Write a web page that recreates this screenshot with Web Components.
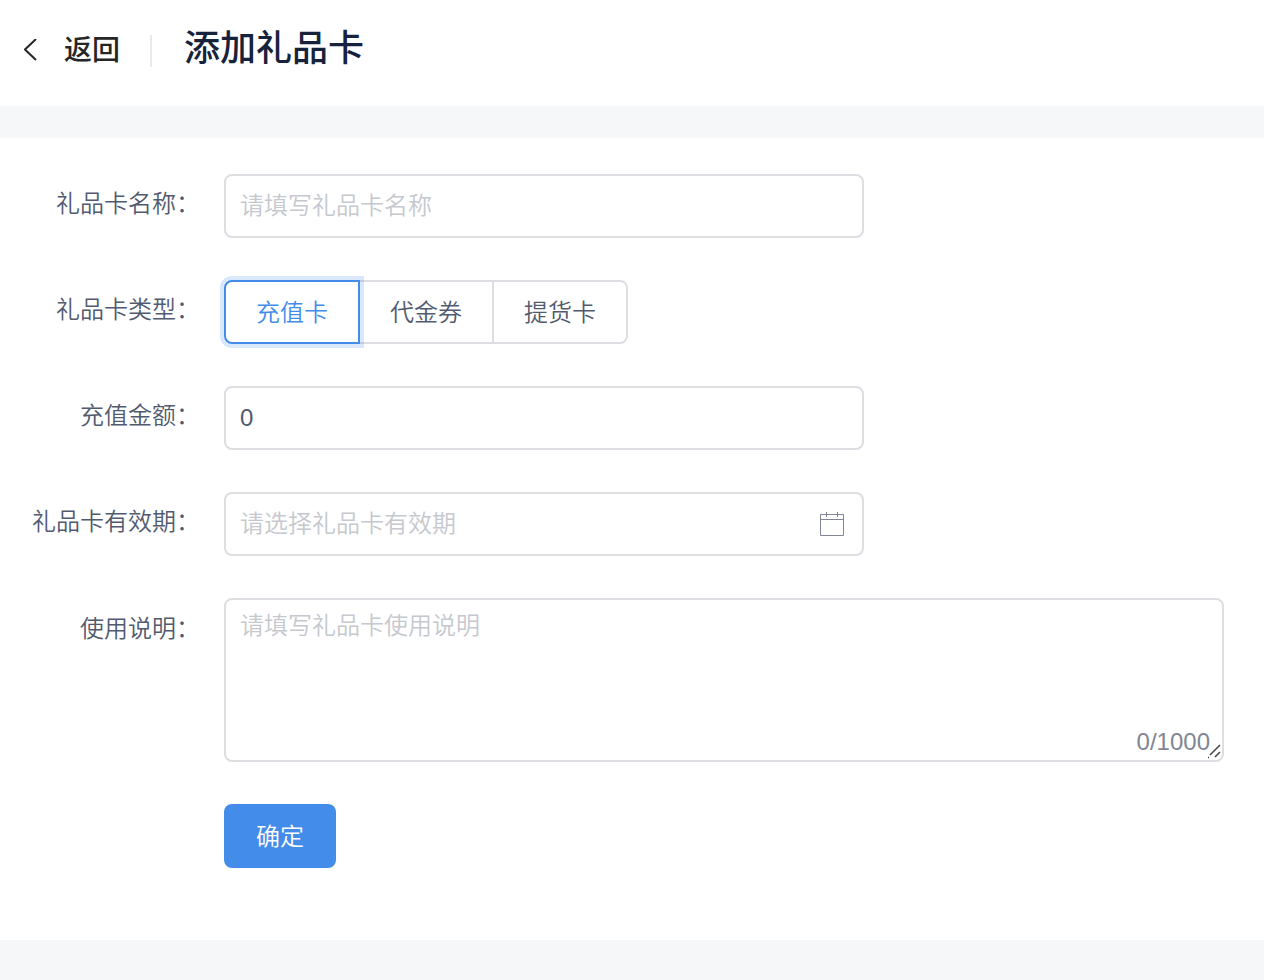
<!DOCTYPE html>
<html lang="zh-CN">
<head>
<meta charset="utf-8">
<meta name="viewport" content="width=device-width, initial-scale=1">
<title>添加礼品卡</title>
<style>
  body {
    margin: 0;
    background: #f5f7f9;
    color: #515a6e;
    font: 24px/36px "Liberation Sans", "Noto Sans CJK SC", sans-serif;
    --border: #dcdee2;
    --primary: #438cea;
    --hint: #c5c8ce;
    --muted: #808695;
    --text-weight: 350;
  }
</style>
</head>
<body>
<gift-card-page></gift-card-page>

<script>
const define = (name, html, setup) => {
  const template = document.createElement('template');
  template.innerHTML = html;
  customElements.define(name, class extends HTMLElement {
    constructor() {
      super();
      this.attachShadow({ mode: 'open' }).append(template.content.cloneNode(true));
    }
    connectedCallback() {
      if (setup) setup(this, this.shadowRoot);
    }
  });
};

/* Shared row layout: right-aligned caption column and a control column. */
const rowStyle = `
  :host { display: grid; grid-template-columns: 200px minmax(0, 1fr); column-gap: 24px; align-items: start; }
  *, *::before, *::after { box-sizing: border-box; }
  .caption { text-align: right; line-height: 60px; font-weight: var(--text-weight); white-space: nowrap; }
  input, textarea, button { font: inherit; font-weight: var(--text-weight); color: inherit; margin: 0; }
  .box { display: block; width: 100%; background: #fff; border: 2px solid var(--border);
         border-radius: 8px; padding: 0 14px; outline: none; }
  .box::placeholder { color: var(--hint); opacity: 1; }
  .box:focus { border-color: var(--primary); }
`;

define('page-header', `
  <style>
    :host { display: flex; align-items: center; min-height: 106px; box-sizing: border-box;
            padding: 0 24px 4px; background: #fff; }
    a { display: flex; align-items: center; gap: 24px; color: #262626; text-decoration: none;
        font-size: 28px; line-height: 40px; font-weight: 500; }
    svg { display: block; }
    .divider { width: 2px; height: 32px; margin: 0 32px 0 30px; background: #e8eaec; }
    h1 { margin: 0; padding-bottom: 4px; font-size: 36px; line-height: 48px; font-weight: 500; color: #17233d; }
  </style>
  <a href="#">
    <svg width="16" height="24" viewBox="0 0 16 24" fill="none" stroke="#262626" stroke-width="2" aria-hidden="true"><path d="M12 0 1 10.500 12 21"/></svg>
    <span>返回</span>
  </a>
  <span class="divider"></span>
  <h1><slot></slot></h1>
`);

define('text-field', `
  <style>${rowStyle}
    .control { display: flex; align-items: center; max-width: 640px; position: relative; }
    .box { height: 64px; }
    ::slotted(svg) { position: absolute; right: 19px; pointer-events: none; }
  </style>
  <label class="caption" for="field"></label>
  <div class="control"><input class="box" id="field" type="text" autocomplete="off"><slot></slot></div>
`, (host, root) => {
  root.querySelector('label').textContent = host.getAttribute('label');
  const input = root.querySelector('input');
  input.placeholder = host.getAttribute('placeholder') || '';
  input.value = host.getAttribute('value') || '';
});

define('choice-field', `
  <style>${rowStyle}
    .group { display: flex; }
    .option { position: relative; height: 64px; padding: 0 30px; line-height: 62px; font-weight: var(--text-weight);
              border: 2px solid var(--border); background: #fff; cursor: pointer; }
    .option + .option { margin-left: -2px; }
    .option:first-child { border-radius: 8px 0 0 8px; }
    .option:last-child { border-radius: 0 8px 8px 0; }
    .option:has(:checked) { z-index: 1; color: var(--primary); border-color: var(--primary);
                            box-shadow: 0 0 0 4px rgba(67, 140, 234, .2); }
    input { position: absolute; inset: 0; width: 100%; height: 100%; opacity: 0; cursor: pointer; }
  </style>
  <span class="caption" id="caption"></span>
  <div class="group" role="radiogroup" aria-labelledby="caption"></div>
`, (host, root) => {
  root.querySelector('.caption').textContent = host.getAttribute('label');
  const group = root.querySelector('.group');
  host.getAttribute('options').split(',').forEach((text, i) => {
    const label = document.createElement('label');
    label.className = 'option';
    const radio = document.createElement('input');
    radio.type = 'radio';
    radio.name = 'choice';
    radio.value = text;
    radio.checked = i === 0;
    label.append(radio, text);
    group.append(label);
  });
});

define('note-field', `
  <style>${rowStyle}
    .caption { line-height: 62px; }
    .control { position: relative; }
    .box { height: 164px; min-height: 164px; padding: 8px 14px; resize: vertical; }
    .box::-webkit-resizer { background: transparent; }
    .count { position: absolute; right: 14px; bottom: 2px; color: var(--muted); pointer-events: none; }
    svg { position: absolute; right: 0; bottom: 3px; pointer-events: none; }
  </style>
  <label class="caption" for="note"></label>
  <div class="control">
    <textarea class="box" id="note" maxlength="1000"></textarea>
    <span class="count">0/1000</span>
    <svg width="16" height="16" viewBox="0 0 16 16" stroke="#444" stroke-width="1.500" aria-hidden="true"><path d="M2 12 12 2M7 14l5-5"/><path d="M0 14.500h1"/></svg>
  </div>
`, (host, root) => {
  root.querySelector('label').textContent = host.getAttribute('label');
  const area = root.querySelector('textarea');
  const count = root.querySelector('.count');
  area.placeholder = host.getAttribute('placeholder');
  area.addEventListener('input', () => { count.textContent = area.value.length + '/1000'; });
});

define('submit-row', `
  <style>${rowStyle}
    button { grid-column: 2; justify-self: start; height: 64px; padding: 2px 32px 0; border: 0;
             border-radius: 8px; background: var(--primary); color: #fff; cursor: pointer; }
  </style>
  <button type="button"><slot></slot></button>
`);

define('gift-card-page', `
  <style>
    :host { display: block; }
    main { display: flex; flex-direction: column; gap: 42px; margin: 32px 0 40px;
           padding: 36px 40px 72px 0; background: #fff; }
  </style>
  <page-header>添加礼品卡</page-header>
  <main>
    <text-field label="礼品卡名称：" placeholder="请填写礼品卡名称"></text-field>
    <choice-field label="礼品卡类型：" options="充值卡,代金券,提货卡"></choice-field>
    <text-field label="充值金额：" value="0"></text-field>
    <text-field label="礼品卡有效期：" placeholder="请选择礼品卡有效期">
      <svg width="26" height="26" viewBox="0 0 26 26" fill="none" stroke="#808695" aria-hidden="true"><path d="M1.500 3.500h23v21h-23zM1.500 8.500h23M7.500 1v5M18.500 1v5"/></svg>
    </text-field>
    <note-field label="使用说明：" placeholder="请填写礼品卡使用说明"></note-field>
    <submit-row>确定</submit-row>
  </main>
`);
</script>
</body>
</html>
